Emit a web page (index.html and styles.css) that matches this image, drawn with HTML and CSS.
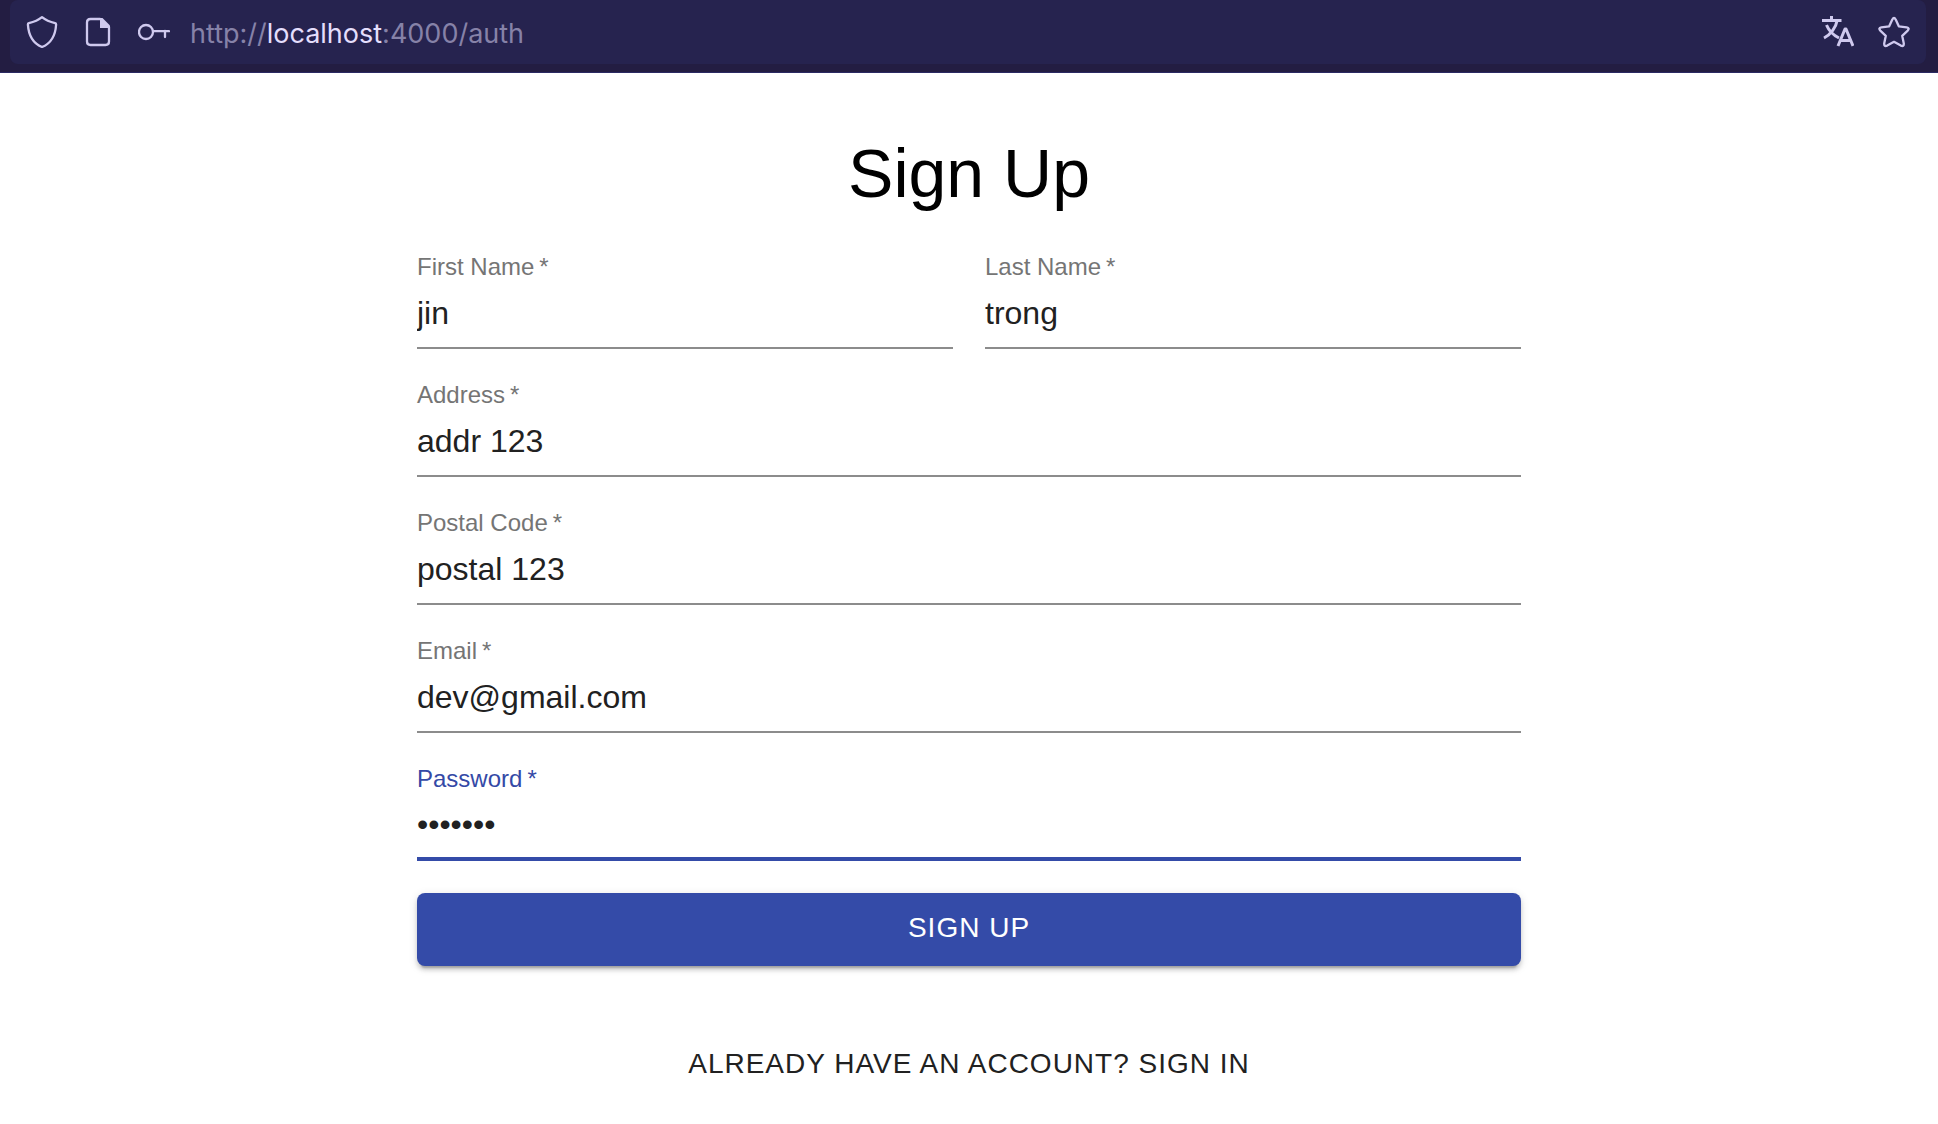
FILE: index.html
```html
<!DOCTYPE html>
<html lang="en">
<head>
<meta charset="utf-8">
<meta name="viewport" content="width=device-width, initial-scale=1">
<title>Sign Up</title>
<link rel="stylesheet" href="styles.css">
</head>
<body>
<header class="toolbar">
  <div class="urlbar">
    <button class="icon-button" type="button" aria-label="Tracking protection">
      <svg class="icon" viewBox="0 0 32 32"><path d="M16 1.200C12.500 4 7 6.200 2.900 7.200Q1.800 7.500 1.900 8.700C2.500 18 5.500 26.800 16 31C26.500 26.800 29.500 18 30.100 8.700Q30.200 7.500 29.100 7.200C25 6.200 19.500 4 16 1.200Z"/></svg>
    </button>
    <button class="icon-button" type="button" aria-label="Site information">
      <svg class="icon" viewBox="0 0 32 32"><path d="M18 3H8.500Q5 3 5 6.500V25.500Q5 29 8.500 29H23.500Q27 29 27 25.500V11"/><path class="solid" d="M18 2H20.500L28 9.500V12H18Z"/></svg>
    </button>
    <button class="icon-button" type="button" aria-label="Saved login">
      <svg class="icon" viewBox="0 0 32 32"><circle cx="8" cy="16" r="7"/><path d="M15 15.200H31M27 15V21"/></svg>
    </button>
    <div class="url">http://<span class="host">localhost</span>:4000/auth</div>
    <button class="icon-button" type="button" aria-label="Translate page">
      <svg class="icon" viewBox="0 0 32 32"><path class="thick" d="M0 4.500H19.500M9.500 0V5M15 5C14 11 9 18.500 2 22M4.500 9C7 15 11 19 17 22"/><path class="thick" d="M16 30L23 13H24L31 30M18.500 24.500H28.500"/></svg>
    </button>
    <button class="icon-button" type="button" aria-label="Bookmark this page">
      <svg class="icon" viewBox="0 0 32 32"><path d="M14.300 3.500Q16 .5 17.700 3.500L20.800 10.300L28.700 11.300Q32 12 29.700 14.600L24.200 19.800L25.800 27.500Q26 31 22.800 29.600L16 25.800L9.200 29.600Q6 31 6.200 27.500L7.800 19.800L2.300 14.600Q0 12 3.300 11.300L11.200 10.300Z"/></svg>
    </button>
  </div>
</header>
<main class="container">
  <h1 class="title">Sign Up</h1>
  <form class="form">
    <div class="field">
      <label class="label" for="first">First Name<span class="asterisk">*</span></label>
      <input class="input" id="first" type="text" value="jin" required>
    </div>
    <div class="field">
      <label class="label" for="last">Last Name<span class="asterisk">*</span></label>
      <input class="input" id="last" type="text" value="trong" required>
    </div>
    <div class="field wide">
      <label class="label" for="address">Address<span class="asterisk">*</span></label>
      <input class="input" id="address" type="text" value="addr 123" required>
    </div>
    <div class="field wide">
      <label class="label" for="postal">Postal Code<span class="asterisk">*</span></label>
      <input class="input" id="postal" type="text" value="postal 123" required>
    </div>
    <div class="field wide">
      <label class="label" for="email">Email<span class="asterisk">*</span></label>
      <input class="input" id="email" type="email" value="dev@gmail.com" required>
    </div>
    <div class="field wide active">
      <label class="label" for="password">Password<span class="asterisk">*</span></label>
      <input class="input" id="password" type="password" value="secret1" required>
    </div>
    <button class="submit wide" type="submit">SIGN UP</button>
  </form>
  <a class="switch" href="#signin">ALREADY HAVE AN ACCOUNT? SIGN IN</a>
</main>
</body>
</html>
```
FILE: styles.css
```css
* {
  box-sizing: border-box;
}

body {
  margin: 0;
  background: #fff;
  color: #000;
  font-family: "Liberation Sans", Arial, sans-serif;
}

.toolbar {
  padding: 0 12px 8px 10px;
  background: #231d42;
  border-bottom: 1px solid #2b2a63;
}

.urlbar {
  display: flex;
  align-items: center;
  gap: 24px;
  height: 64px;
  padding: 0 16px;
  border-radius: 8px;
  background: #26234f;
}

.icon-button {
  display: flex;
  padding: 0;
  border: 0;
  background: none;
  color: #cfc9ee;
}

.icon {
  width: 32px;
  height: 32px;
  fill: none;
  stroke: currentColor;
  stroke-width: 2.3;
  stroke-linejoin: round;
  stroke-linecap: round;
}

.solid {
  fill: currentColor;
  stroke: none;
}

.thick {
  stroke-width: 3;
  stroke-linecap: butt;
}

.url {
  flex: 1;
  margin-left: -4px;
  padding-top: 4px;
  color: #8682a8;
  font: 27px/32px Inter, sans-serif;
}

.host {
  color: #e4defc;
}

.container {
  display: flex;
  flex-direction: column;
  align-items: center;
  width: 100%;
  max-width: 1200px;
  margin: 0 auto;
  padding: 58px 48px 0;
}

.title {
  margin: 0 0 38px;
  font-size: 68px;
  font-weight: 400;
  line-height: 84px;
}

.form {
  display: grid;
  grid-template-columns: 1fr 1fr;
  gap: 32px;
  width: 100%;
}

.wide {
  grid-column: 1 / -1;
}

.field {
  display: flex;
  flex-direction: column;
  min-width: 0;
}

.label {
  color: #757575;
  font-size: 24px;
  line-height: 28px;
}

.asterisk {
  margin-left: 5px;
}

.input {
  width: 100%;
  height: 68px;
  padding: 0 0 2px;
  border: 0;
  border-bottom: 2px solid #8c8c8c;
  border-radius: 0;
  outline: 0;
  background: none;
  color: #212121;
  font: 32px/38px "Liberation Sans", Arial, sans-serif;
}

.active .label {
  color: #3449a6;
}

.active .input {
  padding-bottom: 2px;
  border-bottom: 4px solid #344ba8;
}

.submit {
  height: 73px;
  padding: 0 0 4px;
  border: 0;
  border-radius: 8px;
  background: #344ba8;
  box-shadow: 0 6px 2px -4px rgba(0, 0, 0, .2), 0 4px 4px rgba(0, 0, 0, .14), 0 2px 10px rgba(0, 0, 0, .12);
  color: #fff;
  font: 28px/48px "Liberation Sans", Arial, sans-serif;
}

.switch {
  margin-top: 74px;
  color: #212121;
  font-size: 28px;
  line-height: 48px;
  text-decoration: none;
}

.submit,
.switch {
  letter-spacing: 1px;
}
```
